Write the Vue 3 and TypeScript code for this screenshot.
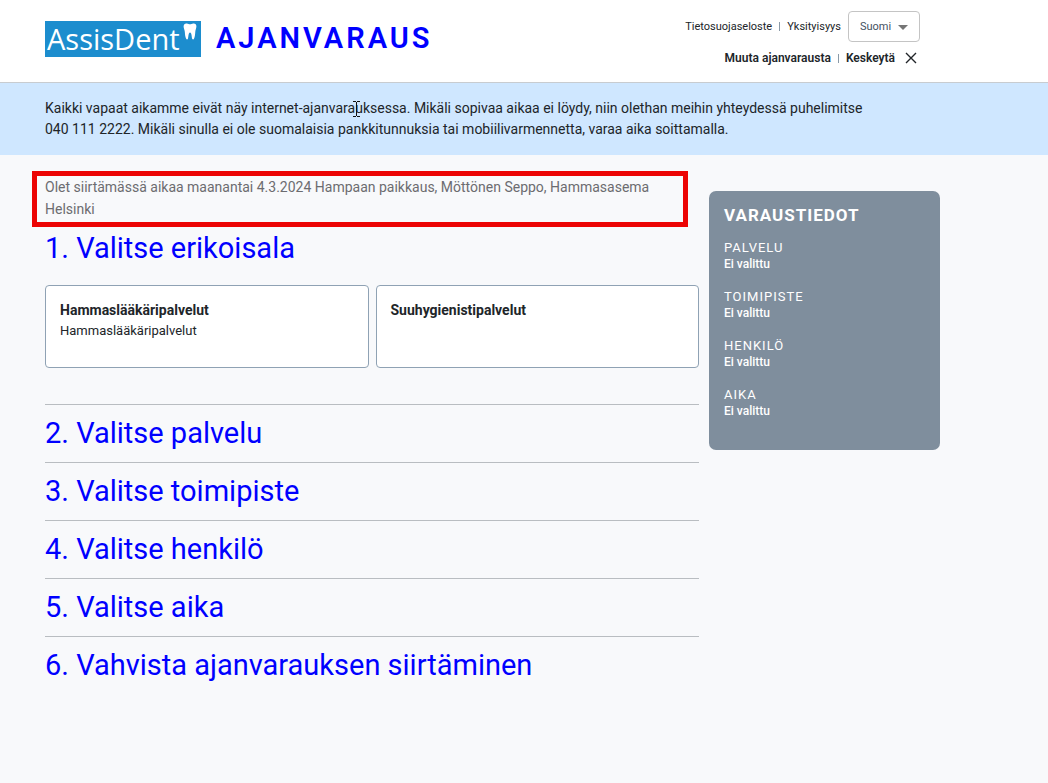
<script setup lang="ts">
import { ref } from 'vue'

interface Service {
  title: string
  description?: string
}

const language = ref('fi')
const specialty = ref<string | null>(null)

const services: Service[] = [
  { title: 'Hammaslääkäripalvelut', description: 'Hammaslääkäripalvelut' },
  { title: 'Suuhygienistipalvelut' },
]

const nextSteps: string[] = [
  '2. Valitse palvelu',
  '3. Valitse toimipiste',
  '4. Valitse henkilö',
  '5. Valitse aika',
  '6. Vahvista ajanvarauksen siirtäminen',
]

const summary: string[] = ['Palvelu', 'Toimipiste', 'Henkilö', 'Aika']
</script>

<template>
  <div class="page">
    <header class="header">
      <div class="brand">
        <a class="logo" href="#">
          <span class="logo-name">AssisDent</span>
          <svg class="tooth" viewBox="0 0 14 17" aria-hidden="true">
            <path
              d="M.6 3.6C.6 1.300 2 .3 3.800.5 5.200.6 6 1.300 7 1.300S8.900.6 10.300.5C12.200.3 13.500 1.500 13.400 3.600c-.1 2-.9 3.200-1.100 5.200-.2 2.300-.3 5.300-1.400 7.200-.5.7-1.400.6-1.700-.2-.5-1.600-.5-6.400-2.200-6.400-1.600 0-1.600 4.800-2.100 6.400-.3.8-1.200.9-1.600.2C2.100 14.100 2 11.100 1.800 8.800 1.600 6.800.6 5.600.6 3.600z"
            />
          </svg>
        </a>
        <h1 class="title">AJANVARAUS</h1>
      </div>
      <div class="tools">
        <nav class="tool-row">
          <a href="#">Tietosuojaseloste</a>
          <span class="divider"></span>
          <a href="#">Yksityisyys</a>
          <span class="language">
            <select v-model="language" aria-label="Kieli">
              <option value="fi">Suomi</option>
            </select>
            <svg class="caret" viewBox="0 0 10 5" aria-hidden="true"><path d="M0 0h10L5 5z" /></svg>
          </span>
        </nav>
        <div class="tool-row actions">
          <button type="button">Muuta ajanvarausta</button>
          <span class="divider"></span>
          <button type="button" class="cancel">
            Keskeytä
            <svg viewBox="0 0 12 12" aria-hidden="true"><path d="M1 1l10 10M11 1L1 11" /></svg>
          </button>
        </div>
      </div>
    </header>

    <section class="banner">
      <p>
        Kaikki vapaat aikamme eivät näy internet-ajanvarauksessa. Mikäli sopivaa aikaa ei löydy, niin
        olethan meihin yhteydessä puhelimitse 040&nbsp;111&nbsp;2222. Mikäli sinulla ei ole suomalaisia
        pankkitunnuksia tai mobiilivarmennetta, varaa aika soittamalla.
      </p>
      <svg class="pointer" viewBox="0 0 7 16" aria-hidden="true">
        <path d="M0 .5h3M4 .5h3M3.500 1v14M0 15.500h3M4 15.500h3" />
      </svg>
    </section>

    <div class="content">
      <main>
        <p class="notice">
          Olet siirtämässä aikaa maanantai 4.3.2024 Hampaan paikkaus, Möttönen Seppo, Hammasasema Helsinki
        </p>
        <section class="step current">
          <h2>1. Valitse erikoisala</h2>
          <div class="cards">
            <button
              v-for="s in services"
              :key="s.title"
              type="button"
              class="card"
              :aria-pressed="specialty === s.title"
              @click="specialty = s.title"
            >
              <strong>{{ s.title }}</strong>
              <span v-if="s.description">{{ s.description }}</span>
            </button>
          </div>
        </section>
        <section v-for="step in nextSteps" :key="step" class="step">
          <h2>{{ step }}</h2>
        </section>
      </main>

      <aside class="summary">
        <h2>VARAUSTIEDOT</h2>
        <dl>
          <div v-for="item in summary" :key="item">
            <dt>{{ item }}</dt>
            <dd>Ei valittu</dd>
          </div>
        </dl>
      </aside>
    </div>
  </div>
</template>

<style>
body {
  margin: 0;
  background: #f8f9fb;
}
</style>

<style scoped>
.page {
  min-height: 100vh;
  background: #f8f9fb;
  color: #212529;
  font-family: Roboto, 'Liberation Sans', sans-serif;
  font-size: 14px;
}

h1,
h2,
p,
dl,
dd {
  margin: 0;
}

a {
  color: inherit;
  text-decoration: none;
}

button {
  padding: 0;
  border: 0;
  background: none;
  color: inherit;
  font: inherit;
  text-align: left;
  cursor: pointer;
}

.header {
  display: flex;
  justify-content: space-between;
  align-items: flex-start;
  padding: 11px 128px 16px 45px;
  border-bottom: 1px solid #c8ccd0;
  background: #fff;
}

.brand {
  display: flex;
  align-items: flex-start;
  gap: 15px;
  padding-top: 10px;
}

.logo {
  display: flex;
  justify-content: space-between;
  box-sizing: border-box;
  width: 156px;
  height: 36px;
  padding: 2px 4px 0 2px;
  background: #1c8dce;
  color: #fff;
}

.logo-name {
  font-family: 'Open Sans', sans-serif;
  font-size: 29px;
  font-weight: 400;
  line-height: 32px;
}

.tooth {
  flex: none;
  width: 14px;
  height: 17px;
  fill: #fff;
}

.title {
  color: #00f;
  font-size: 29px;
  font-weight: 600;
  line-height: 34px;
  letter-spacing: 3px;
}

.tools {
  display: flex;
  flex-direction: column;
  align-items: flex-end;
  gap: 8px;
}

.tool-row {
  display: flex;
  align-items: center;
  gap: 7px;
  font-size: 11px;
  line-height: 13px;
}

.divider {
  width: 1px;
  height: 9px;
  background: #8a9aa8;
}

.language {
  position: relative;
}

.language select {
  display: block;
  width: 72px;
  height: 31px;
  padding: 0 24px 0 11px;
  border: 1px solid #c4c4c4;
  border-radius: 4px;
  background: #fff;
  color: #44525f;
  font: inherit;
  appearance: none;
}

.caret {
  position: absolute;
  top: 14px;
  right: 12px;
  width: 10px;
  height: 5px;
  fill: #757575;
  pointer-events: none;
}

.actions {
  font-size: 12px;
  font-weight: 600;
  line-height: 16px;
}

.cancel {
  display: flex;
  align-items: center;
  gap: 10px;
  padding-right: 3px;
}

.cancel svg {
  width: 12px;
  height: 12px;
  fill: none;
  stroke: #212529;
  stroke-width: 1.4;
}

.banner {
  position: relative;
  padding: 15px 108px 15px 45px;
  background: #cfe7ff;
  line-height: 21px;
}

.pointer {
  position: absolute;
  top: 18px;
  left: 353px;
  width: 7px;
  height: 16px;
  fill: none;
  stroke: #111;
}

.content {
  display: grid;
  grid-template-columns: minmax(0, 1fr) 231px;
  align-items: start;
  gap: 10px;
  padding: 16px 108px 60px 45px;
}

.notice {
  margin: 0 11px 0 -13px;
  padding: 0 8px 2px;
  border: 5px solid #ec0404;
  color: #6c6c70;
  line-height: 22px;
}

.step {
  padding: 10px 0;
  border-top: 1px solid #b9bdc1;
}

.step h2 {
  color: #00f;
  font-size: 29px;
  font-weight: 400;
  line-height: 37px;
}

.step.current {
  padding: 3px 0 36px;
  border-top: 0;
}

.cards {
  display: grid;
  grid-template-columns: 1fr 1fr;
  gap: 7px;
  margin-top: 18px;
}

.card {
  display: flex;
  flex-direction: column;
  box-sizing: border-box;
  min-height: 83px;
  padding: 14px;
  border: 1px solid #8fa2b4;
  border-radius: 4px;
  background: #fff;
}

.card strong {
  font-size: 14px;
  line-height: 21px;
}

.card span {
  font-size: 13px;
  line-height: 20px;
}

.summary {
  margin-top: 20px;
  padding: 14px 15px 30px;
  border-radius: 7px;
  background: #7f8e9d;
  color: #fff;
}

.summary h2 {
  font-size: 17px;
  font-weight: 700;
  line-height: 20px;
  letter-spacing: 1px;
}

.summary dl {
  display: grid;
  gap: 15px;
  margin-top: 14px;
}

.summary dt {
  font-size: 13px;
  line-height: 17px;
  letter-spacing: 1px;
  text-transform: uppercase;
}

.summary dd {
  font-size: 12px;
  font-weight: 500;
  line-height: 17px;
}
</style>
